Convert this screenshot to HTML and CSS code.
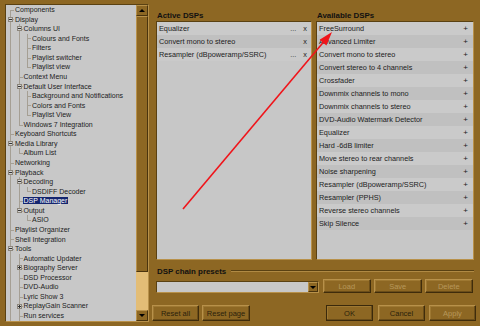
FILE: index.html
```html
<!DOCTYPE html>
<html lang="en">
<head>
    <meta charset="UTF-8">
    <title>Preferences: DSP Manager</title>
    <link rel="stylesheet" href="styles.css">
</head>
<body>

<div class="page">

    <div class="tree-panel">
        <div class="tree-view">
            <ul class="tree">
                <li class="first"><span class="label">Components</span></li>
                <li><span class="tog"></span><span class="label">Display</span>
                    <ul>
                        <li><span class="tog"></span><span class="label">Columns UI</span>
                            <ul>
                                <li><span class="label">Colours and Fonts</span></li>
                                <li><span class="label">Filters</span></li>
                                <li><span class="label">Playlist switcher</span></li>
                                <li class="last"><span class="label">Playlist view</span></li>
                            </ul>
                        </li>
                        <li><span class="label">Context Menu</span></li>
                        <li><span class="tog"></span><span class="label">Default User Interface</span>
                            <ul>
                                <li><span class="label">Background and Notifications</span></li>
                                <li><span class="label">Colors and Fonts</span></li>
                                <li class="last"><span class="label">Playlist View</span></li>
                            </ul>
                        </li>
                        <li class="last"><span class="label">Windows 7 Integration</span></li>
                    </ul>
                </li>
                <li><span class="label">Keyboard Shortcuts</span></li>
                <li><span class="tog"></span><span class="label">Media Library</span>
                    <ul>
                        <li class="last"><span class="label">Album List</span></li>
                    </ul>
                </li>
                <li><span class="label">Networking</span></li>
                <li><span class="tog"></span><span class="label">Playback</span>
                    <ul>
                        <li><span class="tog"></span><span class="label">Decoding</span>
                            <ul>
                                <li class="last"><span class="label">DSDIFF Decoder</span></li>
                            </ul>
                        </li>
                        <li><span class="label selected">DSP Manager</span></li>
                        <li class="last"><span class="tog"></span><span class="label">Output</span>
                            <ul>
                                <li class="last"><span class="label">ASIO</span></li>
                            </ul>
                        </li>
                    </ul>
                </li>
                <li><span class="label">Playlist Organizer</span></li>
                <li><span class="label">Shell Integration</span></li>
                <li><span class="tog"></span><span class="label">Tools</span>
                    <ul>
                        <li><span class="label">Automatic Updater</span></li>
                        <li><span class="tog plus"></span><span class="label">Biography Server</span></li>
                        <li><span class="label">DSD Processor</span></li>
                        <li><span class="label">DVD-Audio</span></li>
                        <li><span class="label">Lyric Show 3</span></li>
                        <li><span class="tog plus"></span><span class="label">ReplayGain Scanner</span></li>
                        <li><span class="label">Run services</span></li>
                    </ul>
                </li>
            </ul>
        </div>
        <div class="scrollbar">
            <div class="sb-btn"><span class="arrow-up"></span></div>
            <div class="sb-thumb"></div>
            <div class="sb-track"></div>
            <div class="sb-btn"><span class="arrow-down"></span></div>
        </div>
    </div>

    <div class="main">
        <div class="dsp-columns">
            <div class="dsp-col">
                <div class="col-head">Active DSPs</div>
                <div class="list">
                    <div class="row"><span class="name">Equalizer</span><span class="dots">...</span><span class="del">x</span></div>
                    <div class="row"><span class="name">Convert mono to stereo</span><span class="del">x</span></div>
                    <div class="row"><span class="name">Resampler (dBpoweramp/SSRC)</span><span class="dots">...</span><span class="del">x</span></div>
                </div>
            </div>
            <div class="dsp-col">
                <div class="col-head">Available DSPs</div>
                <div class="list">
                    <div class="row"><span class="name">FreeSurround</span><span class="add">+</span></div>
                    <div class="row"><span class="name">Advanced Limiter</span><span class="add">+</span></div>
                    <div class="row"><span class="name">Convert mono to stereo</span><span class="add">+</span></div>
                    <div class="row"><span class="name">Convert stereo to 4 channels</span><span class="add">+</span></div>
                    <div class="row"><span class="name">Crossfader</span><span class="add">+</span></div>
                    <div class="row"><span class="name">Downmix channels to mono</span><span class="add">+</span></div>
                    <div class="row"><span class="name">Downmix channels to stereo</span><span class="add">+</span></div>
                    <div class="row"><span class="name">DVD-Audio Watermark Detector</span><span class="add">+</span></div>
                    <div class="row"><span class="name">Equalizer</span><span class="add">+</span></div>
                    <div class="row"><span class="name">Hard -6dB limiter</span><span class="add">+</span></div>
                    <div class="row"><span class="name">Move stereo to rear channels</span><span class="add">+</span></div>
                    <div class="row"><span class="name">Noise sharpening</span><span class="add">+</span></div>
                    <div class="row"><span class="name">Resampler (dBpoweramp/SSRC)</span><span class="add">+</span></div>
                    <div class="row"><span class="name">Resampler (PPHS)</span><span class="add">+</span></div>
                    <div class="row"><span class="name">Reverse stereo channels</span><span class="add">+</span></div>
                    <div class="row"><span class="name">Skip Silence</span><span class="add">+</span></div>
                </div>
            </div>
        </div>

        <div class="presets">
            <div class="group-head"><span>DSP chain presets</span><span class="rule"></span></div>
            <div class="preset-row">
                <div class="combo"><span class="combo-text"></span><span class="combo-btn"><span class="arrow-down"></span></span></div>
                <button class="btn small" disabled>Load</button>
                <button class="btn small" disabled>Save</button>
                <button class="btn small" disabled>Delete</button>
            </div>
        </div>

        <div class="dialog-buttons">
            <button class="btn">Reset all</button>
            <button class="btn wide">Reset page</button>
            <button class="btn default push">OK</button>
            <button class="btn">Cancel</button>
            <button class="btn" disabled>Apply</button>
        </div>
    </div>

</div>

<svg class="pointer" width="480" height="326" viewBox="0 0 480 326">
    <line x1="183" y1="209" x2="324" y2="41.5" stroke="#f0141a" stroke-width="1.6"/>
    <polygon points="332,32 326.4,45.6 319.6,39.8" fill="#f0141a"/>
</svg>

</body>
</html>
```

FILE: styles.css
```css
body {
    margin: 0;
    padding: 0;
    background: #8d6723;
    font-family: "Liberation Sans", Arial, sans-serif;
    font-size: 7px;
    color: #1c1c1c;
    overflow: hidden;
}

.page {
    display: grid;
    grid-template-columns: 144px 1fr;
    column-gap: 3px;
    padding: 4px 4px 0 5px;
    height: 326px;
    box-sizing: border-box;
}

/* ---------- tree ---------- */

.tree-panel {
    display: flex;
    height: 318px;
    border: 1px solid;
    border-color: #5a4112 #b8914a #b8914a #5a4112;
    box-sizing: border-box;
    background: #c8c8c8;
}

.tree-view {
    flex: 1;
    overflow: hidden;
}

.tree, .tree ul {
    list-style: none;
    margin: 0;
    padding: 0;
}

.tree ul {
    margin-left: -0.5px;
}

.tree li {
    position: relative;
    padding-left: 9px;
    line-height: 9.56px;
    white-space: nowrap;
}

.tree li::before {
    content: "";
    position: absolute;
    left: 4px;
    top: 0;
    bottom: 0;
    border-left: 1px solid #a59f94;
}

.tree li.first::before {
    top: 4.78px;
}

.tree li.last::before {
    bottom: auto;
    height: 4.78px;
}

.tree li::after {
    content: "";
    position: absolute;
    left: 4px;
    top: 4.78px;
    width: 4px;
    border-top: 1px solid #a59f94;
}

.tog {
    position: absolute;
    left: 2px;
    top: 2.3px;
    width: 5px;
    height: 5px;
    border: 1px solid #8c867c;
    background: #d2d2d2;
    box-sizing: border-box;
    z-index: 1;
}

.tog::before {
    content: "";
    position: absolute;
    left: 0;
    top: 1px;
    width: 3px;
    height: 1px;
    background: #333;
}

.tog.plus::after {
    content: "";
    position: absolute;
    left: 1px;
    top: 0;
    width: 1px;
    height: 3px;
    background: #333;
}

.label {
    padding: 0 1px;
    margin-left: -1px;
}

.label.selected {
    background: #14256f;
    color: #fff;
}

/* ---------- scrollbar ---------- */

.scrollbar {
    width: 12px;
    display: flex;
    flex-direction: column;
    background: #e3bd76;
}

.sb-btn, .sb-thumb {
    background: #8d6723;
    border: 1px solid;
    border-color: #b8914a #4a340e #4a340e #b8914a;
    box-sizing: border-box;
}

.sb-btn {
    height: 11px;
    display: flex;
    align-items: center;
    justify-content: center;
}

.sb-thumb {
    height: 256px;
}

.sb-track {
    flex: 1;
}

.arrow-up {
    border-left: 3px solid transparent;
    border-right: 3px solid transparent;
    border-bottom: 3px solid #000;
}

.arrow-down {
    border-left: 3px solid transparent;
    border-right: 3px solid transparent;
    border-top: 3px solid #000;
}

/* ---------- main area ---------- */

.main {
    display: flex;
    flex-direction: column;
}

.dsp-columns {
    display: grid;
    grid-template-columns: 156px 158px;
    column-gap: 4px;
    padding-left: 4px;
}

.col-head {
    height: 17px;
    box-sizing: border-box;
    padding: 7px 0 0 1px;
    font-size: 7.9px;
    line-height: 10px;
    font-weight: bold;
    color: #111;
}

.list {
    height: 239px;
    background: #c7c7c7;
    border: 1px solid;
    border-color: #5a4112 #b8914a #b8914a #5a4112;
    box-sizing: border-box;
    overflow: hidden;
}

.row {
    display: flex;
    align-items: center;
    height: 13px;
    padding: 0 5px 0 2px;
    background: #cacaca;
    font-size: 7.3px;
    color: #1c1c1c;
    white-space: nowrap;
}

.row:nth-child(even) {
    background: #c0c0c0;
}

.row .name {
    flex: 1;
}

.row .dots {
    margin-right: 7px;
    color: #333;
}

.row .del {
    margin-right: -1px;
}

.row .add {
    font-size: 8px;
}

/* ---------- presets ---------- */

.presets {
    padding: 0 2px 0 4px;
}

.group-head {
    display: flex;
    align-items: center;
    gap: 5px;
    margin-top: 6px;
    height: 10px;
    padding-left: 1px;
    font-size: 7.9px;
    font-weight: bold;
    color: #111;
}

.group-head .rule {
    flex: 1;
    height: 0;
    border-top: 1px solid #5a4112;
    border-bottom: 1px solid #b08a44;
}

.preset-row {
    display: flex;
    align-items: flex-end;
    gap: 3.5px;
    margin-top: 3px;
}

.combo {
    display: flex;
    width: 163px;
    height: 12px;
    margin-right: 0.5px;
    background: #c8c8c8;
    border: 1px solid;
    border-color: #5a4112 #b8914a #b8914a #5a4112;
    box-sizing: border-box;
}

.combo-text {
    flex: 1;
}

.combo-btn {
    width: 10px;
    display: flex;
    align-items: center;
    justify-content: center;
    background: #8d6723;
    border: 1px solid;
    border-color: #b8914a #4a340e #4a340e #b8914a;
    box-sizing: border-box;
}

/* ---------- buttons ---------- */

.btn {
    width: 47px;
    height: 16px;
    padding: 0;
    background: #8d6723;
    border: 1px solid;
    border-color: #b8914a #3f2c0b #3f2c0b #b8914a;
    box-shadow: inset -1px -1px #6c4e19, inset 1px 1px #9e7832;
    font-family: "Liberation Sans", Arial, sans-serif;
    font-size: 7.5px;
    color: #2b1f0b;
    box-sizing: border-box;
}

.btn.small {
    width: 47.5px;
    height: 14px;
}

.btn.wide {
    width: 48px;
}

.btn:disabled {
    color: #b7975b;
}

.btn.default {
    outline: 1px solid #3a290b;
    outline-offset: -1px;
}

.dialog-buttons {
    display: flex;
    gap: 3px;
    margin-top: 12px;
}

.dialog-buttons .push {
    margin-left: auto;
    margin-right: 1px;
}

.dialog-buttons .push ~ .btn {
    margin-left: 1px;
}

/* ---------- annotation ---------- */

.pointer {
    position: absolute;
    left: 0;
    top: 0;
    pointer-events: none;
}
```
